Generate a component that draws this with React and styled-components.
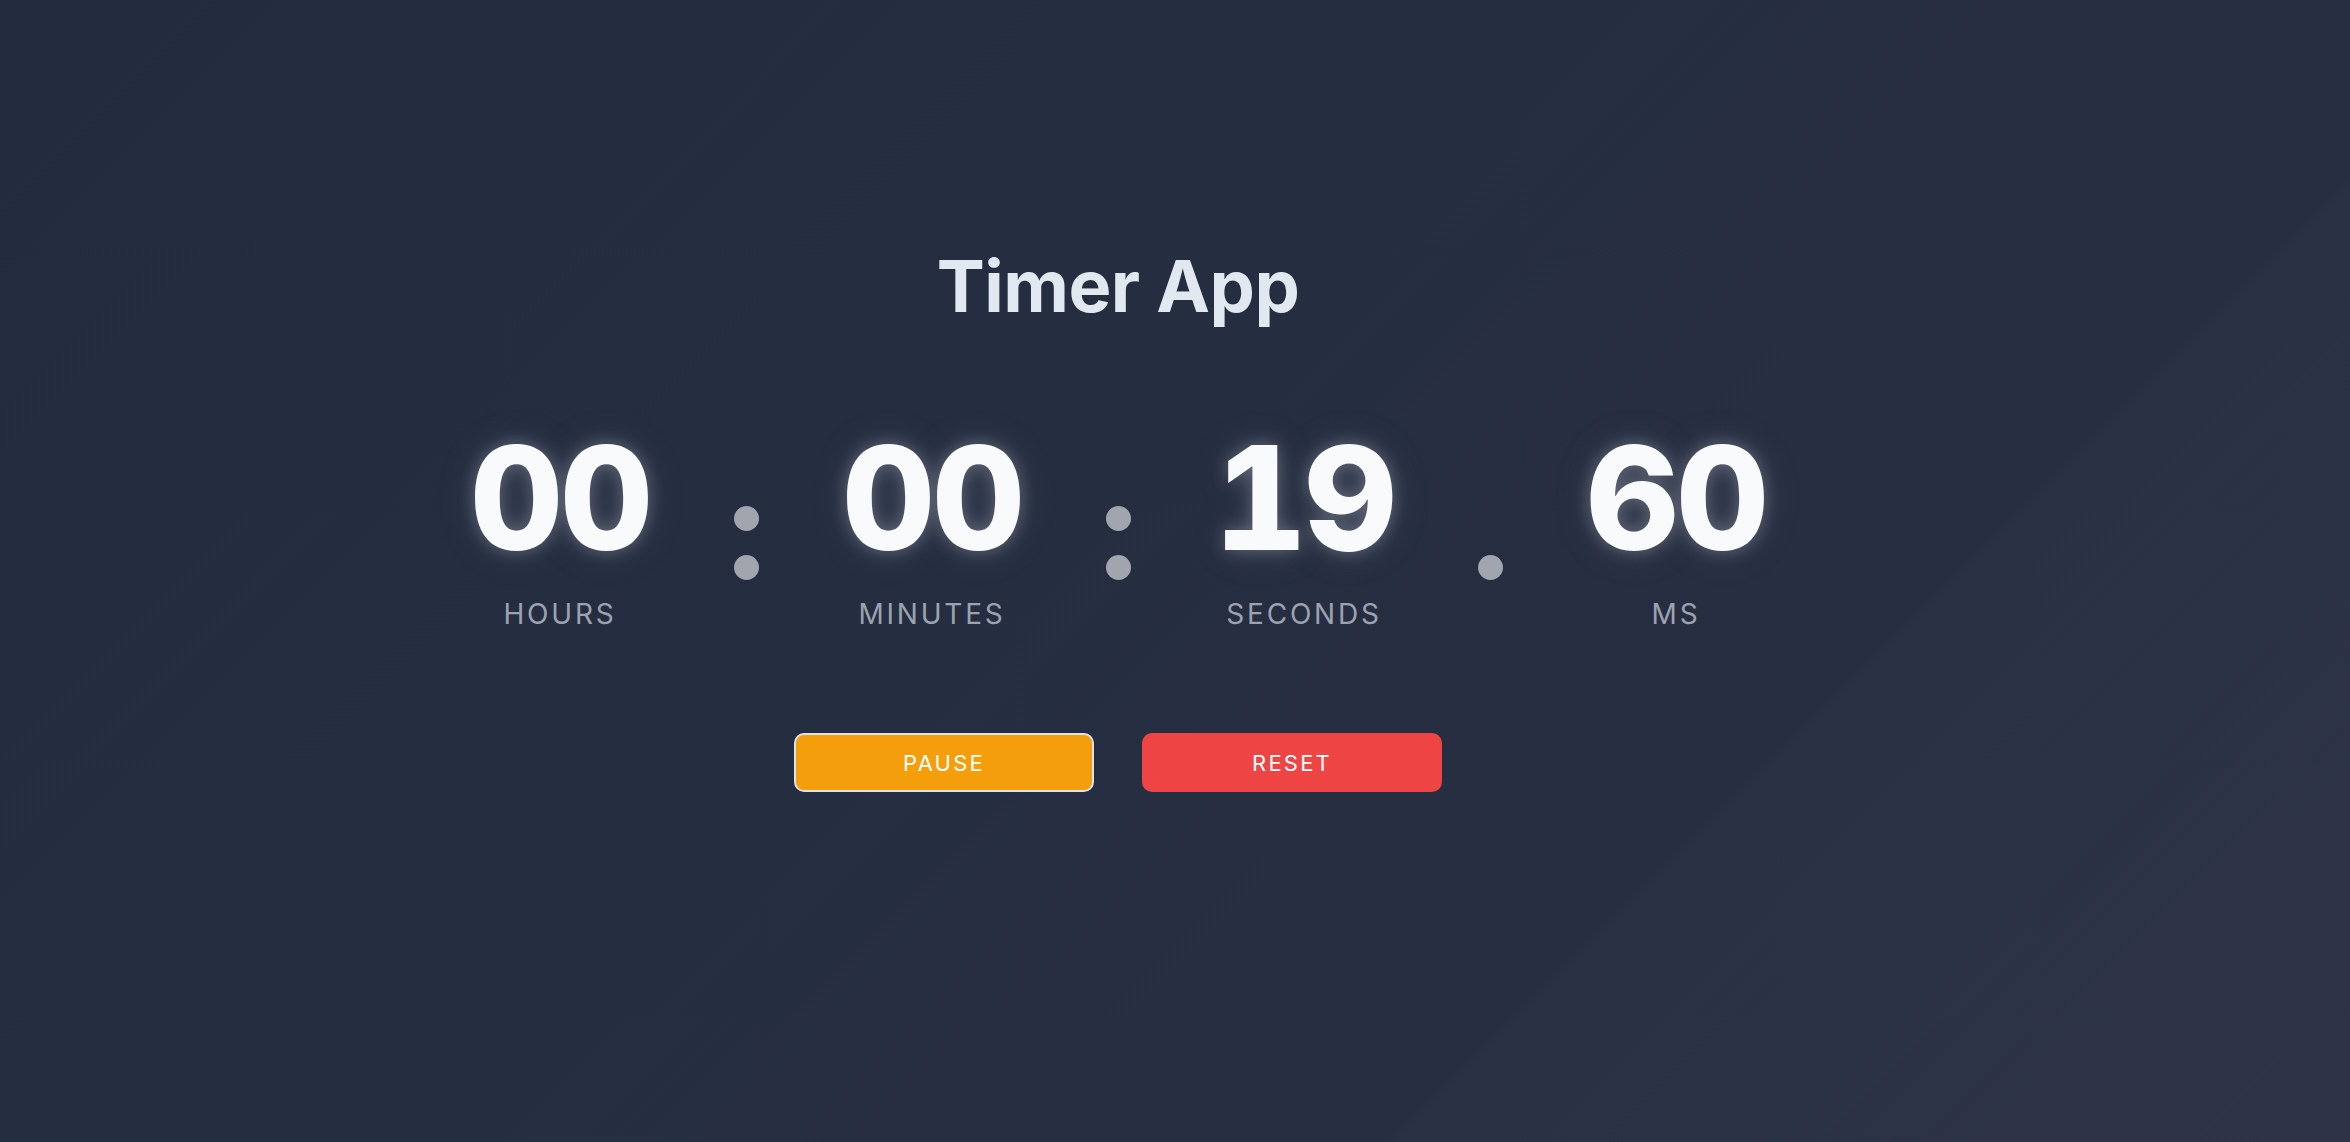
import styled, { createGlobalStyle } from "styled-components";

const GlobalStyle = createGlobalStyle`
* {
box-sizing: border-box;
}
html, body {
margin: 0;
padding: 0;
}
body {
font-family: 'Inter', 'Noto Sans', sans-serif;
}
`

const units = [
    { value: "00", label: "Hours" },
    { value: "00", label: "Minutes" },
    { value: "19", label: "Seconds" },
    { value: "60", label: "ms" },
];

export default function App() {
    return (
        <>
            <GlobalStyle />
            <Page>
                <Title>Timer App</Title>
                <Display>
                    {units.map((u, i) => (
                        <Group key={u.label}>
                            {i > 0 && (
                                <Separator single={i === 3}>
                                    {i < 3 && <Dot />}
                                    <Dot />
                                </Separator>
                            )}
                            <Unit>
                                <Digits>{u.value}</Digits>
                                <Label>{u.label}</Label>
                            </Unit>
                        </Group>
                    ))}
                </Display>
                <Controls>
                    <Button color="#f59e0b" focused>Pause</Button>
                    <Button color="#ef4444">Reset</Button>
                </Controls>
            </Page>
        </>
    )
}

const Page = styled.div`
min-height: 100vh;
display: flex;
flex-direction: column;
align-items: center;
padding: 250px 114px 0 0;
background: linear-gradient(135deg, #232c3f 0%, #272e42 72.3%, #2b3145 72.7%, #2e3347 100%);
`

const Title = styled.h1`
margin: 0;
font-size: 72px;
line-height: 1;
font-weight: 700;
color: #e2e8f0;
letter-spacing: -0.5px;
`

const Display = styled.div`
display: flex;
align-items: flex-start;
margin-top: 104px;
`

const Group = styled.div`
display: flex;
align-items: flex-start;
`

const Unit = styled.div`
width: 240px;
display: flex;
flex-direction: column;
align-items: center;
`

const Digits = styled.div`
font-size: 144px;
line-height: 1;
font-weight: 800;
font-variant-numeric: tabular-nums;
color: #f8fafc;
letter-spacing: -3px;
text-shadow: 0 0 18px rgba(255, 255, 255, 0.28), 0 0 40px rgba(148, 163, 184, 0.15);
`

const Label = styled.div`
margin-top: 30px;
font-size: 28px;
line-height: 1;
font-weight: 400;
text-transform: uppercase;
letter-spacing: 0.1em;
color: #9ca3af;
`

const Separator = styled.div`
width: 132px;
display: flex;
flex-direction: column;
align-items: center;
gap: 24px;
padding-top: ${p => (p.single ? "129px" : "80px")};
`

const Dot = styled.span`
width: 25px;
height: 25px;
border-radius: 50%;
background: #a1a5ae;
`

const Controls = styled.div`
display: flex;
gap: 48px;
margin-top: 105px;
`

const Button = styled.button`
width: 300px;
height: 59px;
border-radius: 10px;
border: 2px solid ${p => (p.focused ? "#dbe3ee" : p.color)};
background: ${p => p.color};
color: #ffffff;
font-family: 'Inter', 'Noto Sans', sans-serif;
font-size: 22px;
font-weight: 400;
letter-spacing: 0.1em;
text-transform: uppercase;
cursor: pointer;
`
